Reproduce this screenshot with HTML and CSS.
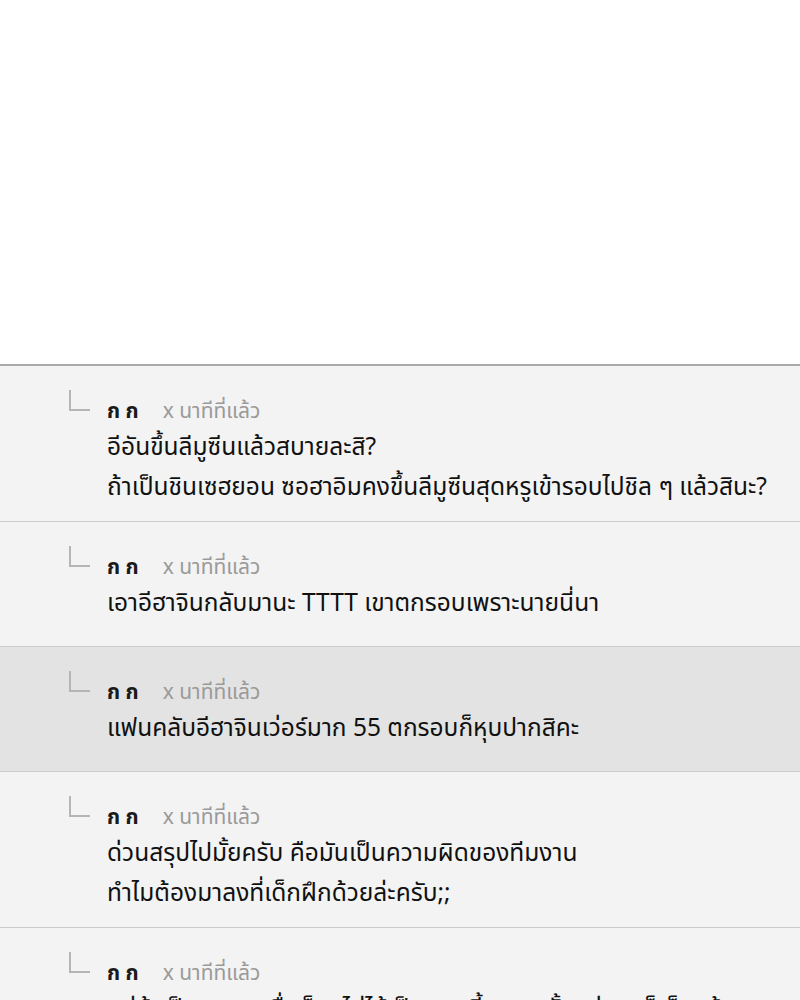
FILE: index.html
```html
<!DOCTYPE html>
<html lang="th">
<head>
    <meta charset="UTF-8">
    <meta name="viewport" content="width=device-width, initial-scale=1.0">
    <title>ความคิดเห็น</title>
    <link rel="stylesheet" href="styles.css">
</head>
<body>

    <div class="blank"></div>

    <div class="comments">
        <div class="comment">
            <span class="reply-mark"></span>
            <div class="body">
                <div class="meta"><span class="name">ก ก</span><span class="time">x นาทีที่แล้ว</span></div>
                <div class="text">อีอันขึ้นลีมูซีนแล้วสบายละสิ?<br>ถ้าเป็นชินเซฮยอน ซอฮาอิมคงขึ้นลีมูซีนสุดหรูเข้ารอบไปชิล ๆ แล้วสินะ?</div>
            </div>
        </div>

        <div class="comment">
            <span class="reply-mark"></span>
            <div class="body">
                <div class="meta"><span class="name">ก ก</span><span class="time">x นาทีที่แล้ว</span></div>
                <div class="text">เอาอีฮาจินกลับมานะ TTTT เขาตกรอบเพราะนายนี่นา</div>
            </div>
        </div>

        <div class="comment active">
            <span class="reply-mark"></span>
            <div class="body">
                <div class="meta"><span class="name">ก ก</span><span class="time">x นาทีที่แล้ว</span></div>
                <div class="text">แฟนคลับอีฮาจินเว่อร์มาก 55 ตกรอบก็หุบปากสิคะ</div>
            </div>
        </div>

        <div class="comment">
            <span class="reply-mark"></span>
            <div class="body">
                <div class="meta"><span class="name">ก ก</span><span class="time">x นาทีที่แล้ว</span></div>
                <div class="text">ด่วนสรุปไปมั้ยครับ คือมันเป็นความผิดของทีมงาน<br>ทำไมต้องมาลงที่เด็กฝึกด้วยล่ะครับ;;</div>
            </div>
        </div>

        <div class="comment">
            <span class="reply-mark"></span>
            <div class="body">
                <div class="meta"><span class="name">ก ก</span><span class="time">x นาทีที่แล้ว</span></div>
                <div class="text">แต่ถ้าเป็นรายการอื่นก็คงไม่ได้เป็นแบบนี้หรอก ตั้งแต่แรกก็เห็นแล้ว</div>
            </div>
        </div>
    </div>

</body>
</html>
```

FILE: styles.css
```css
body {
    margin: 0;
    padding: 0;
    background-color: #ffffff;
    font-family: "Noto Sans Thai", "Noto Sans Thai UI", "Noto Sans", sans-serif;
    color: #111;
}

.blank {
    height: 364px;
    background-color: #ffffff;
}

.comments {
    border-top: 2px solid #a9a9a9;
    box-shadow: inset 0 1px 1px #d0d0d0;
    background-color: #f3f3f3;
}

.comment {
    display: flex;
    min-height: 125px;
    box-sizing: border-box;
    padding: 30px 10px 13px 69px;
    border-bottom: 1px solid #cccccc;
    background-color: #f3f3f3;
}

.comment.active {
    background-color: #e3e3e3;
}

/* the little "L" that marks a reply */
.reply-mark {
    flex: none;
    width: 19px;
    height: 19px;
    margin-top: -6px;
    margin-right: 17px;
    border-left: 2px solid #b5b5b5;
    border-bottom: 2px solid #b5b5b5;
}

.body {
    flex: 1;
    min-width: 0;
}

.meta {
    height: 32px;
    line-height: 32px;
    font-size: 21px;
}

.name {
    font-weight: bold;
    color: #1a1a1a;
    margin-right: 24px;
}

.time {
    color: #9a9a9a;
}

.text {
    font-size: 24.5px;
    line-height: 40px;
    white-space: nowrap;
    overflow: hidden;
}
```
